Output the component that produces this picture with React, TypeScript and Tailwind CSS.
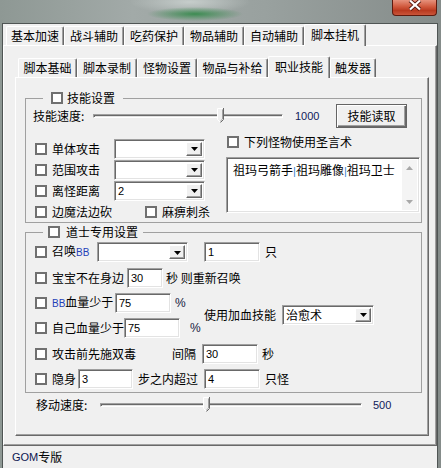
import React from "react";

const CJK = "font-['Noto_Sans_CJK_SC','Noto_Sans_CJK_JP',sans-serif]";
const NUM = "font-['Liberation_Sans','Noto_Sans_CJK_SC',sans-serif]";
const SUNKEN =
  "bg-white border border-t-[#a0a0a0] border-l-[#a0a0a0] border-b-white border-r-white shadow-[inset_1px_1px_0_#696969,inset_-1px_-1px_0_#e3e3e3]";

function CheckBox() {
  return <span className="block w-[12px] h-[12px] border-2 border-[#707070] bg-white shrink-0" />;
}

function Check({ label, className = "" }: { label: React.ReactNode; className?: string }) {
  return (
    <div className={`flex items-center shrink-0 ${className}`}>
      <CheckBox />
      <span className="ml-[5px] whitespace-nowrap">{label}</span>
    </div>
  );
}

function Arrow() {
  return (
    <svg width="7" height="4" viewBox="0 0 7 4">
      <polygon points="0,0 7,0 3.5,4" fill="#000" />
    </svg>
  );
}

function Combo({ w, value = "" }: { w: string; value?: React.ReactNode }) {
  return (
    <div className={`${w} h-[20px] ${SUNKEN} flex items-stretch p-[2px] shrink-0`}>
      <span className="flex-1 flex items-center pl-[1px] whitespace-nowrap">{value}</span>
      <span className="w-[16px] bg-[#f0f0f0] border border-t-white border-l-white border-b-[#696969] border-r-[#696969] shadow-[inset_-1px_-1px_0_#a0a0a0] flex items-center justify-center pt-[1px]">
        <Arrow />
      </span>
    </div>
  );
}

function Edit({ w, value }: { w: string; value: string }) {
  return (
    <div className={`${w} h-[20px] ${SUNKEN} flex items-center pl-[3px] ${NUM} text-[11px] shrink-0`}>
      {value}
    </div>
  );
}

function Thumb() {
  return (
    <svg width="7" height="16" viewBox="0 0 7 16">
      <path d="M0.5 11.5V0.5H6.5V11.5L3.5 14.5Z" fill="#f0f0f0" />
      <path d="M0.5 11.5V0.5H6" stroke="#ffffff" fill="none" />
      <path d="M0.5 11.5L3.5 14.5" stroke="#ffffff" fill="none" />
      <path d="M6.5 0V11.5L3.5 14.5" stroke="#696969" fill="none" />
      <path d="M5.5 1.5V11L3.2 13.3" stroke="#a0a0a0" fill="none" />
    </svg>
  );
}

function Slider({ w, thumb }: { w: string; thumb: string }) {
  return (
    <div className={`relative ${w} h-[16px] flex items-center shrink-0`}>
      <div className="w-full h-[4px] border border-t-[#a0a0a0] border-l-[#a0a0a0] border-b-white border-r-white bg-[#e3e3e3] shadow-[inset_1px_1px_0_#696969]" />
      <span className={`absolute top-0 ${thumb}`}>
        <Thumb />
      </span>
    </div>
  );
}

function Tab({ label, w, selected = false }: { label: string; w: string; selected?: boolean }) {
  return (
    <div
      className={`${w} ${
        selected ? "h-[22px] -mb-[1px] pb-[2px] relative z-10" : "h-[19px]"
      } bg-[#f0f0f0] border-l border-t border-white border-r border-r-[#696969] shadow-[inset_-1px_0_0_#a0a0a0] rounded-tl-[2px] rounded-tr-[2px] flex items-center justify-center whitespace-nowrap shrink-0`}
    >
      {label}
    </div>
  );
}

function SmallTri({ up }: { up?: boolean }) {
  return (
    <svg width="7" height="4" viewBox="0 0 7 4">
      <polygon points={up ? "0,4 7,4 3.5,0" : "0,0 7,0 3.5,4"} fill="#a8a8a8" />
    </svg>
  );
}

export default function App() {
  return (
    <div
      className={`w-[441px] h-[468px] overflow-hidden text-[12px] leading-[14px] text-black ${CJK} bg-[radial-gradient(ellipse_48px_7px_at_195px_14px,#3d8c52,transparent),radial-gradient(ellipse_60px_12px_at_190px_2px,#c6cdcb,transparent),linear-gradient(90deg,#8e9894_0%,#a2aaa8_30%,#99a19f_60%,#858c8a_100%)]`}
    >
      {/* caption strip */}
      <div className="h-[23px] flex justify-end pr-[4px]">
        <div className="w-[45px] h-[16px] rounded-bl-[4px] rounded-br-[4px] border border-t-0 border-[#5e1a0e] bg-[linear-gradient(180deg,#e6927c_0%,#d0583c_45%,#b93a20_70%,#c9553a_100%)] flex items-start justify-center">
          <svg width="16" height="11" viewBox="0 0 16 11">
            <path d="M3 0.5L8 5L13 0.5M3 9.5L8 5L13 9.5" stroke="#5a1a10" strokeWidth="4" fill="none" />
            <path d="M3 0.5L8 5L13 0.5M3 9.5L8 5L13 9.5" stroke="#ffffff" strokeWidth="2.2" fill="none" />
          </svg>
        </div>
      </div>

      {/* window */}
      <div className="ml-[2px] w-[436px] h-[445px] border-l border-t border-r border-[#4f5554] bg-[#f0f0f0] flex flex-col">
        {/* top tabs */}
        <div className="h-[21px] flex items-end pl-[3px]">
          <Tab label="基本加速" w="w-[58px]" />
          <Tab label="战斗辅助" w="w-[60px]" />
          <Tab label="吃药保护" w="w-[60px]" />
          <Tab label="物品辅助" w="w-[60px]" />
          <Tab label="自动辅助" w="w-[60px]" />
          <Tab label="脚本挂机" w="w-[62px]" selected />
        </div>

        {/* outer panel */}
        <div className="h-[401px] border-l border-t border-white border-r border-b border-r-[#696969] border-b-[#696969] shadow-[inset_-1px_-1px_0_#a0a0a0] pt-[10px] pl-[11px]">
          {/* inner tabs */}
          <div className="h-[21px] flex items-end pl-[3px]">
            <Tab label="脚本基础" w="w-[59px]" />
            <Tab label="脚本录制" w="w-[60px]" />
            <Tab label="怪物设置" w="w-[60px]" />
            <Tab label="物品与补给" w="w-[71px]" />
            <Tab label="职业技能" w="w-[62px]" selected />
            <Tab label="触发器" w="w-[46px]" />
          </div>

          {/* inner panel */}
          <div className="w-[414px] h-[359px] border-l border-t border-white border-r border-b border-r-[#696969] border-b-[#696969] shadow-[inset_-1px_-1px_0_#a0a0a0]">
            {/* group 1 */}
            <fieldset className="ml-[9px] mt-[13px] w-[397px] border border-[#a0a0a0] p-0 m-0 min-w-0">
              <legend className="ml-[17px] px-[4px] p-0">
                <div className="flex items-center h-[14px] pl-[4px] pr-[4px]">
                  <CheckBox />
                  <span className="ml-[4px]">技能设置</span>
                </div>
              </legend>
              <div className="flex items-center h-[24px] -mt-[1px] pl-[7px]">
                <span className="w-[60px] shrink-0">技能速度:</span>
                <Slider w="w-[190px]" thumb="left-[124px]" />
                <span className={`ml-[12px] w-[41px] shrink-0 ${NUM} text-[11px] text-[#10205a]`}>1000</span>
                <div className="w-[71px] h-[24px] border border-[#646464] shadow-[inset_1px_1px_0_#fff,inset_-1px_-1px_0_#696969,inset_-2px_-2px_0_#a0a0a0] flex items-center justify-center shrink-0">
                  技能读取
                </div>
              </div>
              <div className="flex">
                <div className="w-[200px] mt-[10px] pl-[9px] flex flex-col">
                  <div className="h-[21px] flex items-center">
                    <Check label="单体攻击" className="w-[79px]" />
                    <Combo w="w-[91px]" />
                  </div>
                  <div className="h-[21px] flex items-center">
                    <Check label="范围攻击" className="w-[79px]" />
                    <Combo w="w-[91px]" />
                  </div>
                  <div className="h-[21px] flex items-center">
                    <Check label="离怪距离" className="w-[79px]" />
                    <Combo w="w-[91px]" value={<span className={`${NUM} text-[11px]`}>2</span>} />
                  </div>
                  <div className="h-[21px] flex items-center">
                    <Check label="边魔法边砍" className="w-[110px]" />
                    <Check label="麻痹刺杀" />
                  </div>
                </div>
                <div className="w-[194px] mt-[7px] flex flex-col">
                  <div className="h-[14px] flex items-center pl-[1px]">
                    <Check label="下列怪物使用圣言术" />
                  </div>
                  <div className={`mt-[8px] h-[56px] ${SUNKEN} flex p-[2px]`}>
                    <div className="flex-1 pl-[4px] pt-[3px] whitespace-nowrap">
                      祖玛弓箭手<span className={`${NUM} text-[11px] text-[#3b7fd0]`}>|</span>祖玛雕像
                      <span className={`${NUM} text-[11px] text-[#3b7fd0]`}>|</span>祖玛卫士
                    </div>
                    <div className="w-[15px] bg-[#f4f4f4] flex flex-col justify-between items-center py-[6px]">
                      <SmallTri up />
                      <SmallTri />
                    </div>
                  </div>
                </div>
              </div>
            </fieldset>

            {/* group 2 */}
            <fieldset className="ml-[9px] mt-[2px] w-[397px] border border-[#a0a0a0] p-0 min-w-0">
              <legend className="ml-[17px] p-0">
                <div className="flex items-center h-[14px] pl-[5px] pr-[5px]">
                  <CheckBox />
                  <span className="ml-[6px]">道士专用设置</span>
                </div>
              </legend>
              <div className="pl-[9px] flex flex-col">
                <div className="h-[26px] flex items-center">
                  <Check
                    label={
                      <>
                        召唤<span className={`${NUM} text-[10px] text-[#1f3fb8]`}>BB</span>
                      </>
                    }
                    className="w-[62px]"
                  />
                  <Combo w="w-[91px]" />
                  <Edit w="w-[56px] ml-[16px]" value="1" />
                  <span className="ml-[5px]">只</span>
                </div>
                <div className="h-[25px] flex items-center">
                  <Check label="宝宝不在身边" className="w-[92px]" />
                  <Edit w="w-[36px]" value="30" />
                  <span className="ml-[3px] whitespace-nowrap">秒 则重新召唤</span>
                </div>
                <div className="flex items-center">
                  <div className="w-[169px] flex flex-col">
                    <div className="h-[25px] flex items-center">
                      <Check
                        label={
                          <>
                            <span className={`${NUM} text-[10px] text-[#1f3fb8]`}>BB</span>血量少于
                          </>
                        }
                        className="w-[80px]"
                      />
                      <Edit w="w-[56px]" value="75" />
                      <span className={`ml-[4px] ${NUM} text-[12px] text-[#151a40]`}>%</span>
                    </div>
                    <div className="h-[26px] flex items-center">
                      <Check label="自己血量少于" className="w-[89px]" />
                      <Edit w="w-[56px]" value="75" />
                      <span className={`ml-[10px] ${NUM} text-[12px] text-[#151a40]`}>%</span>
                    </div>
                  </div>
                  <div className="flex items-center -mt-[2px]">
                    <span className="whitespace-nowrap">使用加血技能</span>
                    <Combo w="w-[92px] ml-[6px]" value="治愈术" />
                  </div>
                </div>
                <div className="h-[25px] flex items-center">
                  <Check label="攻击前先施双毒" className="w-[137px]" />
                  <span className="w-[30px] shrink-0">间隔</span>
                  <Edit w="w-[56px]" value="30" />
                  <span className="ml-[4px]">秒</span>
                </div>
                <div className="h-[26px] flex items-center">
                  <Check label="隐身" className="w-[43px]" />
                  <Edit w="w-[55px]" value="3" />
                  <span className="ml-[5px] w-[66px] shrink-0">步之内超过</span>
                  <Edit w="w-[56px]" value="4" />
                  <span className="ml-[5px]">只怪</span>
                </div>
              </div>
            </fieldset>

            {/* move speed */}
            <div className="h-[24px] flex items-center pl-[20px]">
              <span className="w-[64px] shrink-0">移动速度:</span>
              <Slider w="w-[262px]" thumb="left-[103px]" />
              <span className={`ml-[11px] ${NUM} text-[11px] text-[#10205a]`}>500</span>
            </div>
          </div>
        </div>

        {/* status bar */}
        <div className="h-[22px] flex items-center pl-[9px]">
          <span className={`${NUM} text-[11px] text-[#0c1650]`}>GOM</span>
          <span>专版</span>
        </div>
      </div>
    </div>
  );
}
